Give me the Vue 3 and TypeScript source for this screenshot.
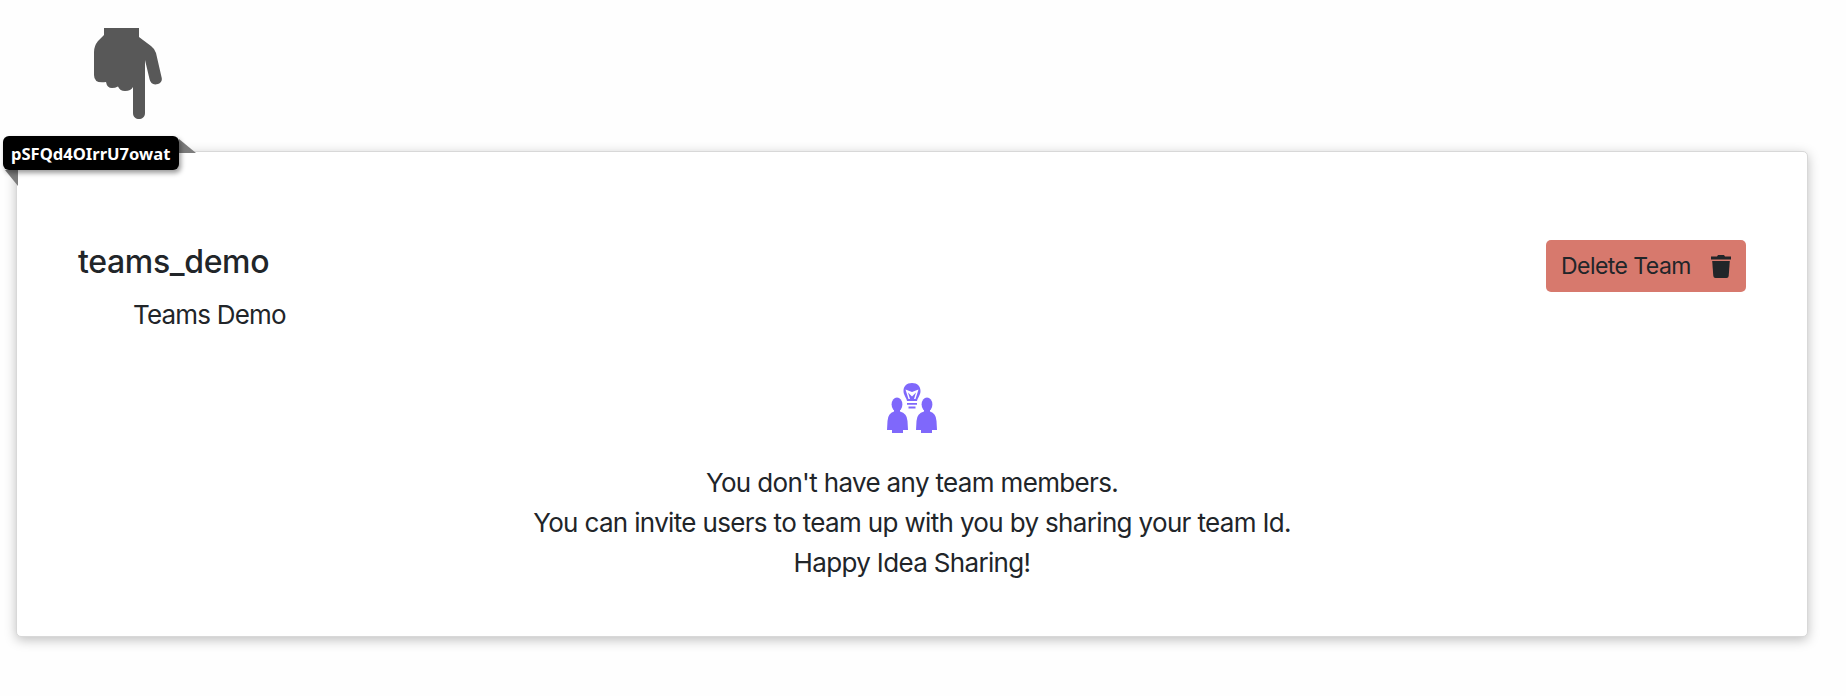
<script setup lang="ts">
const teamId = 'pSFQd4OIrrU7owat'
const teamName = 'teams_demo'
const teamDescription = 'Teams Demo'
const messages: string[] = [
  "You don't have any team members.",
  'You can invite users to team up with you by sharing your team Id.',
  'Happy Idea Sharing!',
]
</script>

<template>
  <main class="page">
    <svg class="pointer" viewBox="0 0 68 92" aria-hidden="true">
      <path
        d="M10 0H45V9L57 18Q61 21 62 25L67.500 49Q69 54 64 56Q57 58 55.500 51L51 32V85C51 93 39 93 39 85V59Q37 63 31 63Q26 63 24 58.500Q21 60 18 60Q13 60 12 54Q0 56 0 47V24Q0 18 4 13L10 7Z"
      />
    </svg>
    <section class="card">
      <div class="ribbon">
        <svg class="fold fold-right" viewBox="0 0 17 14"><path d="M0 0L17 14H0Z" /></svg>
        <svg class="fold fold-left" viewBox="0 0 13 16"><path d="M0 0H13V16Z" /></svg>
        <span class="ribbon-label"><span class="ribbon-text">{{ teamId }}</span></span>
      </div>
      <header class="card-header">
        <div>
          <h1 class="title">{{ teamName }}</h1>
          <p class="description">{{ teamDescription }}</p>
        </div>
        <button class="delete" type="button">
          <span>Delete Team</span>
          <svg class="trash" viewBox="0 0 20 23" aria-hidden="true">
            <path d="M0 1.600H6L7 0H13L14 1.600H20V4.500H0Z" />
            <path d="M1.200 6H18.800L17.700 21Q17.500 23 15.500 23H4.500Q2.500 23 2.300 21Z" />
          </svg>
        </button>
      </header>
      <div class="empty">
        <svg class="team-icon" viewBox="0 0 50 50" aria-hidden="true">
          <ellipse cx="10" cy="21.500" rx="5.400" ry="7" />
          <path d="M7 26H13V28.500Q20 30 20.500 38L21 47H16V50H5V47H0L.5 38Q1 30 7 28.500Z" />
          <ellipse cx="40" cy="21.500" rx="5.400" ry="7" />
          <path d="M37 26H43V28.500Q49 30 49.500 38L50 47H45V50H34V47H29L29.500 38Q30 30 37 28.500Z" />
          <path d="M25 0C19.500 0 16.500 3.500 16.500 8C16.500 12 19 14 20 18H30C31 14 33.500 12 33.500 8C33.500 3.500 30.500 0 25 0Z" />
          <path class="filament" d="M18.500 6.500L25 9L31.500 6.500L28.500 16H27L29 9.500L25 13.500L21 9.500L23 16H21.500Z" />
          <path d="M20 20H30V21.800H20ZM21.500 23.500H28.500V25.500H21.500Z" />
        </svg>
        <div class="messages">
          <p v-for="message in messages" :key="message">{{ message }}</p>
        </div>
      </div>
    </section>
  </main>
</template>

<style>
body {
  background: #fefefe;
}
</style>

<style scoped>
.page {
  box-sizing: border-box;
  height: 696px;
  padding: 28px 38px 0 16px;
  display: flex;
  flex-direction: column;
  color: #212529;
  font-family: Inter, "Liberation Sans", sans-serif;
}
.pointer {
  width: 68px;
  height: 92px;
  margin-left: 78px;
  fill: #585858;
  flex: none;
}
.card {
  position: relative;
  box-sizing: border-box;
  height: 486px;
  margin-top: 31px;
  border: 1px solid #d8d8d8;
  border-radius: 5px;
  background: #fff;
  box-shadow: 0 3px 12px rgba(0, 0, 0, 0.25);
}
.ribbon {
  position: absolute;
  left: -14px;
  top: -16px;
}
.ribbon-label {
  position: relative;
  display: flex;
  align-items: center;
  box-sizing: border-box;
  width: 176px;
  height: 34px;
  padding-left: 8px;
  border-radius: 6px;
  background: #000;
  color: #fff;
  box-shadow: 2px 3px 5px rgba(0, 0, 0, 0.4);
  font: 700 16px/34px "Noto Sans", sans-serif;
  white-space: nowrap;
}
.ribbon-text {
  transform: translateY(1px) scaleX(1.035);
  transform-origin: left center;
}
.fold {
  position: absolute;
  fill: #7c7c7c;
}
.fold-right {
  width: 17px;
  height: 14px;
  left: 176px;
  top: 3px;
}
.fold-left {
  width: 13px;
  height: 16px;
  left: 2px;
  top: 34px;
}
.card-header {
  display: flex;
  justify-content: space-between;
  align-items: flex-start;
  padding: 88px 61px 0;
}
.title {
  margin: 3px 0 0;
  font-size: 32px;
  line-height: 38px;
  font-weight: 500;
  letter-spacing: -0.35px;
}
.description {
  margin: 14px 0 0 55px;
  font-size: 26px;
  line-height: 40px;
  letter-spacing: -0.8px;
}
.delete {
  display: flex;
  align-items: center;
  justify-content: space-between;
  box-sizing: border-box;
  width: 200px;
  height: 52px;
  padding: 0 15px 0 15px;
  border: 0;
  border-radius: 5px;
  background: #d7796d;
  color: #212529;
  font: 400 23px/36px Inter, "Liberation Sans", sans-serif;
  letter-spacing: -0.55px;
  white-space: nowrap;
}
.trash {
  width: 20px;
  height: 23px;
  fill: #212529;
}
.empty {
  display: flex;
  flex-direction: column;
  align-items: center;
  padding-top: 48px;
}
.team-icon {
  width: 50px;
  height: 50px;
  fill: #7f68fb;
}
.team-icon .filament {
  fill: #fff;
}
.messages {
  margin-top: 30px;
  text-align: center;
}
.messages p {
  margin: 0;
  font-size: 26px;
  line-height: 40.2px;
  letter-spacing: -0.66px;
}
</style>
